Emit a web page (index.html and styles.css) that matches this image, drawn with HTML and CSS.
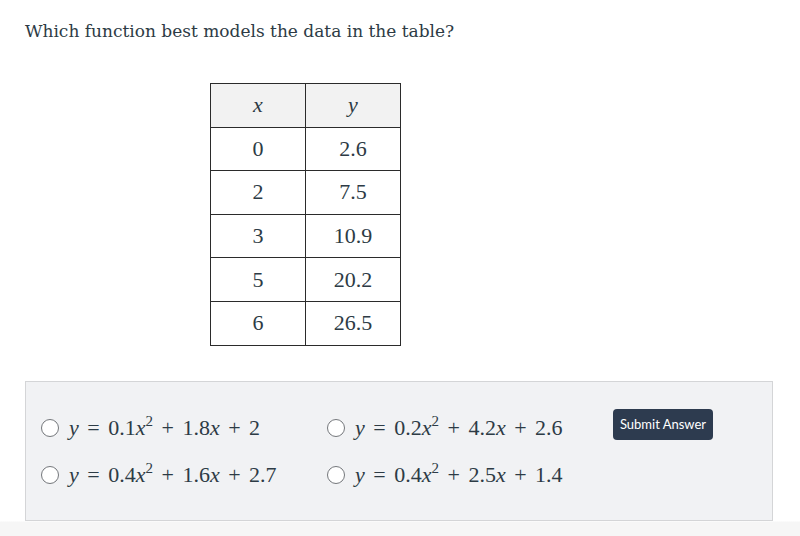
FILE: index.html
```html
<!DOCTYPE html>
<html>
<head>
<meta charset="utf-8">
<link rel="stylesheet" href="styles.css">
</head>
<body>
<div class="page">
  <p class="question">Which function best models the data in the table?</p>
  <table class="data">
    <thead>
      <tr><th><i>x</i></th><th><i>y</i></th></tr>
    </thead>
    <tbody>
      <tr><td>0</td><td>2.6</td></tr>
      <tr><td>2</td><td>7.5</td></tr>
      <tr><td>3</td><td>10.9</td></tr>
      <tr><td>5</td><td>20.2</td></tr>
      <tr><td>6</td><td>26.5</td></tr>
    </tbody>
  </table>
  <div class="answers">
    <div class="options">
      <label class="opt"><span class="radio"></span><span class="math"><i>y</i><span class="rel">=</span>0.1<i>x</i><sup>2</sup><span class="bin">+</span>1.8<i>x</i><span class="bin">+</span>2</span></label>
      <label class="opt"><span class="radio"></span><span class="math"><i>y</i><span class="rel">=</span>0.2<i>x</i><sup>2</sup><span class="bin">+</span>4.2<i>x</i><span class="bin">+</span>2.6</span></label>
      <label class="opt"><span class="radio"></span><span class="math"><i>y</i><span class="rel">=</span>0.4<i>x</i><sup>2</sup><span class="bin">+</span>1.6<i>x</i><span class="bin">+</span>2.7</span></label>
      <label class="opt"><span class="radio"></span><span class="math"><i>y</i><span class="rel">=</span>0.4<i>x</i><sup>2</sup><span class="bin">+</span>2.5<i>x</i><span class="bin">+</span>1.4</span></label>
    </div>
    <button class="submit">Submit Answer</button>
  </div>
</div>
</body>
</html>
```

FILE: styles.css
```css
html, body {
  margin: 0;
  padding: 0;
  background: #ffffff;
}
.page {
  width: 800px;
  height: 536px;
  box-sizing: border-box;
  padding: 18px 27px 0 25px;
  background: linear-gradient(to bottom, #ffffff 0, #ffffff 521px, #f6f6f6 522px);
}
.question {
  margin: 0;
  font-family: "DejaVu Serif", serif;
  font-size: 17px;
  line-height: 26px;
  color: #2d3b45;
}
.data {
  border-collapse: collapse;
  margin: 39px 0 0 185px;
  font-family: "Liberation Serif", serif;
  font-size: 22px;
  color: #2d3b45;
}
.data th, .data td {
  border: 1px solid #2b2b2b;
  width: 94px;
  height: 42.6px;
  padding: 0;
  text-align: center;
  font-weight: normal;
}
.data th {
  background: #f2f2f2;
}
.answers {
  margin-top: 35px;
  height: 138px;
  border: 1px solid #d4d5d7;
  background: #f1f2f4;
  display: flex;
  align-items: flex-start;
  padding: 0 0 0 15px;
}
.options {
  display: grid;
  grid-template-columns: 286px 286px;
  row-gap: 25px;
  margin-top: 35px;
}
.opt {
  display: flex;
  align-items: center;
  height: 22px;
}
.radio {
  width: 18px;
  height: 18px;
  border: 1.5px solid #74777b;
  border-radius: 50%;
  background: #ffffff;
  box-sizing: border-box;
  margin-right: 10px;
  flex: none;
}
.math {
  font-family: "Liberation Serif", serif;
  font-size: 22px;
  color: #2d3b45;
  white-space: nowrap;
}
.math i {
  font-style: italic;
}
.rel {
  margin: 0 8.5px;
}
.bin {
  margin: 0 8.5px;
}
.math sup {
  font-size: 15px;
  line-height: 0;
  vertical-align: 9px;
}
.submit {
  margin: 27px 0 0 0;
  width: 100px;
  height: 31px;
  border: none;
  border-radius: 4px;
  background: #2d3b4f;
  color: #ffffff;
  font-family: Lato, sans-serif;
  font-size: 13px;
  padding: 0;
}
```
